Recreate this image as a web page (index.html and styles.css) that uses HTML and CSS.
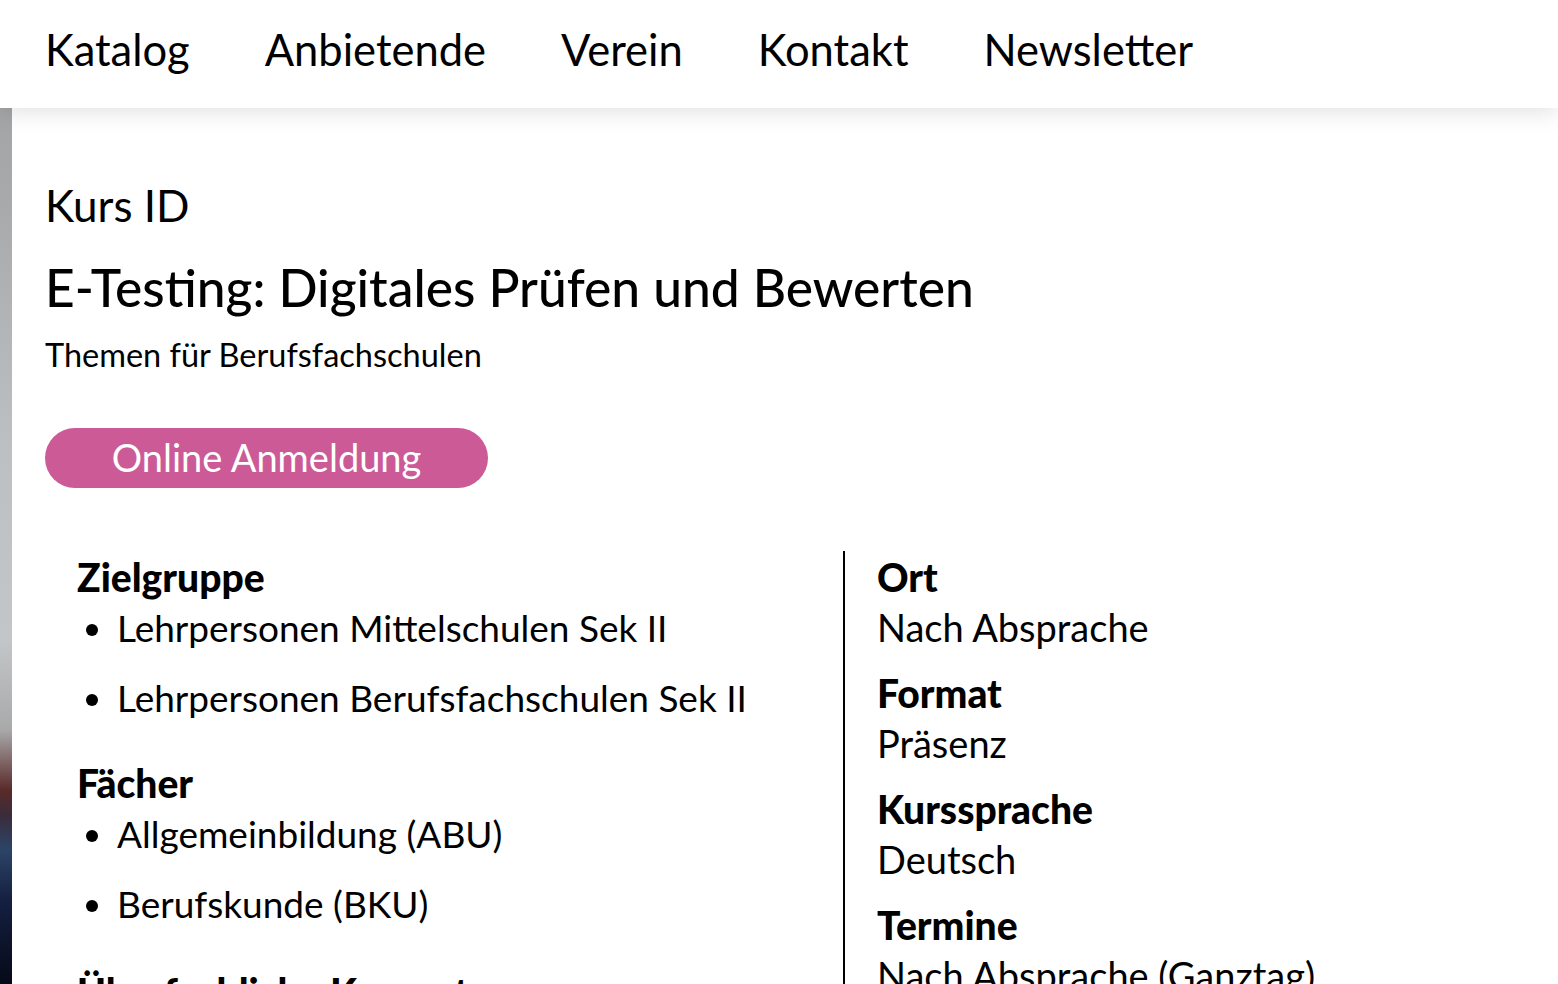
FILE: index.html
```html
<!DOCTYPE html>
<html lang="de">
<head>
<meta charset="utf-8">
<title>E-Testing: Digitales Prüfen und Bewerten</title>
<link rel="stylesheet" href="styles.css">
</head>
<body>
<header class="topbar">
  <nav class="nav">
    <a class="nav-link" href="#">Katalog</a>
    <a class="nav-link" href="#">Anbietende</a>
    <a class="nav-link" href="#">Verein</a>
    <a class="nav-link" href="#">Kontakt</a>
    <a class="nav-link" href="#">Newsletter</a>
  </nav>
</header>
<main class="page">
  <div class="course-id">Kurs ID</div>
  <h1 class="title">E-Testing: Digitales Prüfen und Bewerten</h1>
  <p class="subtitle">Themen für Berufsfachschulen</p>
  <a class="btn" href="#">Online Anmeldung</a>

  <div class="details">
    <section class="col col-left">
      <h2 class="label">Zielgruppe</h2>
      <ul class="list">
        <li>Lehrpersonen Mittelschulen Sek II</li>
        <li>Lehrpersonen Berufsfachschulen Sek II</li>
      </ul>
      <h2 class="label">Fächer</h2>
      <ul class="list">
        <li>Allgemeinbildung (ABU)</li>
        <li>Berufskunde (BKU)</li>
      </ul>
      <h2 class="label">Überfachliche Kompetenzen</h2>
    </section>
    <section class="col col-right">
      <div class="info">
        <h2 class="label">Ort</h2>
        <p class="value">Nach Absprache</p>
      </div>
      <div class="info">
        <h2 class="label">Format</h2>
        <p class="value">Präsenz</p>
      </div>
      <div class="info">
        <h2 class="label">Kurssprache</h2>
        <p class="value">Deutsch</p>
      </div>
      <div class="info">
        <h2 class="label">Termine</h2>
        <p class="value">Nach Absprache (Ganztag)</p>
      </div>
    </section>
  </div>
</main>
</body>
</html>
```
FILE: styles.css
```css
* { box-sizing: border-box; }

html, body {
  margin: 0;
  padding: 0;
}

body {
  font-family: "Lato", "Noto Sans", sans-serif;
  color: #000;
  background: linear-gradient(to bottom,
    #9ea0a2 0px, #a7a9ab 200px, #bdc0c2 450px, #c3c6c8 640px,
    #a9a9aa 730px, #5a2a2a 790px, #3a2c3a 815px, #2c4468 850px,
    #142040 900px, #060a18 984px);
  background-repeat: no-repeat;
  min-height: 984px;
  overflow: hidden;
}

.topbar {
  position: relative;
  z-index: 2;
  background: #fff;
  height: 108px;
  box-shadow: 0 3px 22px rgba(0, 0, 0, 0.13);
}

.nav {
  display: flex;
  align-items: center;
  height: 100%;
  padding-left: 45px;
  gap: 75px;
}

.nav-link {
  font-size: 43.5px;
  color: #000;
  text-decoration: none;
  line-height: 1;
  padding-bottom: 8px;
}

.page {
  margin-left: 12px;
  background: #fff;
  min-height: 876px;
  padding: 72px 0 0 33px;
}

.course-id {
  font-size: 44px;
  line-height: 50px;
}

.title {
  margin: 27px 0 0;
  font-size: 51.5px;
  line-height: 60px;
  font-weight: 500;
}

.subtitle {
  margin: 20px 0 0;
  font-size: 32.5px;
  line-height: 36px;
}

.btn {
  display: inline-flex;
  align-items: center;
  justify-content: center;
  margin-top: 55px;
  width: 443px;
  height: 60px;
  border-radius: 30px;
  background: #cb5a96;
  color: #fff;
  text-decoration: none;
  font-size: 38px;
  padding-bottom: 2px;
}

.details {
  display: grid;
  grid-template-columns: 798px 1fr;
  margin-top: 63px;
}

.col-left {
  padding: 4px 0 0 32px;
}

.col-right {
  border-left: 2px solid #000;
  padding: 4px 0 0 32px;
}

.label {
  margin: 0;
  font-size: 39px;
  line-height: 44px;
  font-weight: 900;
}

.list {
  margin: 4px 0 38px;
  padding: 0 0 0 40px;
  font-size: 37px;
  line-height: 50px;
}

.list li {
  margin-bottom: 20px;
}

.list li:last-child {
  margin-bottom: 0;
}

.list:last-of-type {
  margin-bottom: 41px;
}

.info {
  margin-bottom: 19px;
}

.value {
  margin: 3px 0 0;
  font-size: 38px;
  line-height: 50px;
}
```
